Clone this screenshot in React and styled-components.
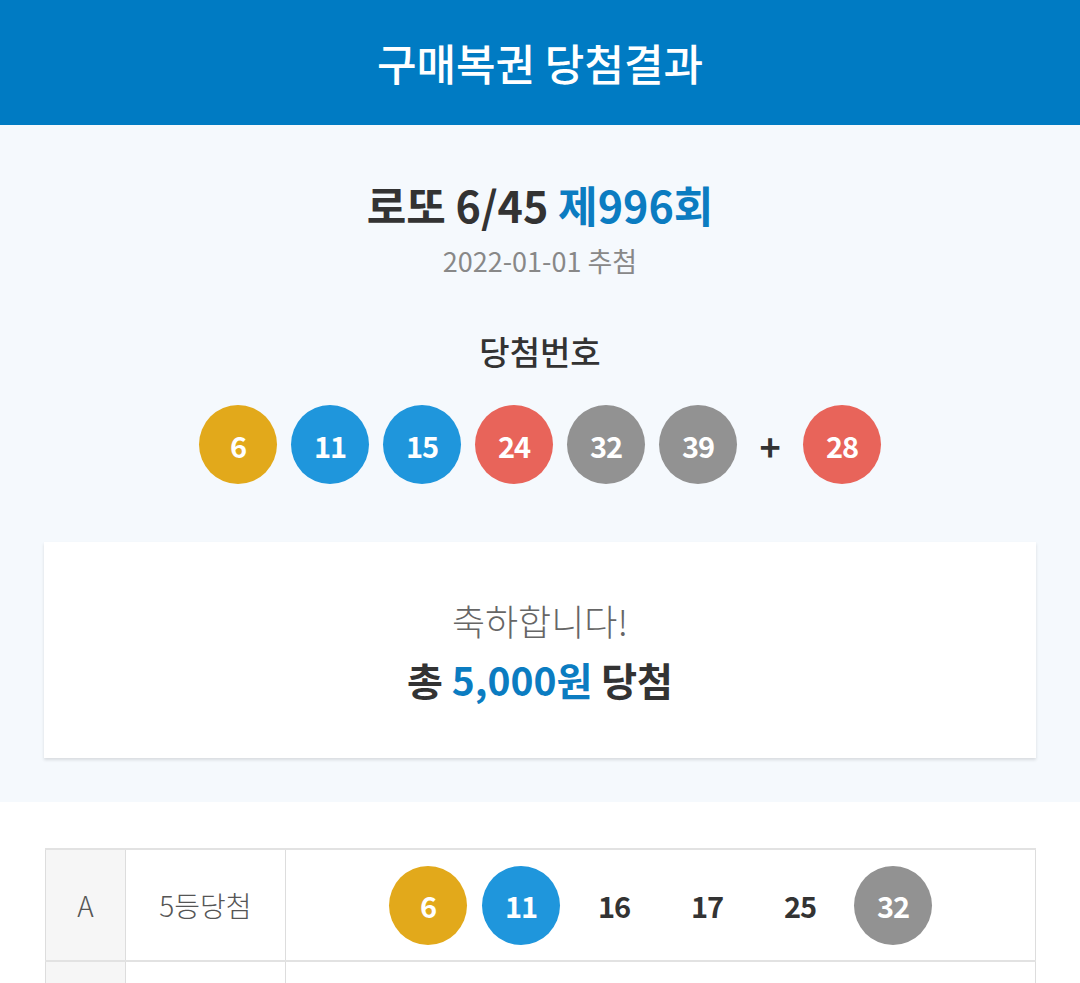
import React from 'react';
import styled, { createGlobalStyle } from 'styled-components';

const GlobalStyle = createGlobalStyle`
  html, body {
    margin: 0;
    padding: 0;
    background: #ffffff;
    font-family: "Noto Sans CJK KR", "Noto Sans", sans-serif;
  }
`;

const Page = styled.div`
  width: 1080px;
  min-height: 983px;
  background: #fff;
`;

const Header = styled.header`
  height: 125px;
  background: #007bc3;
  display: flex;
  align-items: center;
  justify-content: center;
  color: #fff;
  font-size: 43px;
  font-weight: 500;
  padding-bottom: 2px;
  box-sizing: border-box;
`;

const Summary = styled.section`
  background: #f5f9fd;
  padding: 53px 44px 44px;
  display: flex;
  flex-direction: column;
  align-items: center;
`;

const Round = styled.h1`
  margin: 0;
  font-size: 43px;
  font-weight: 700;
  color: #333;
  line-height: 52px;
`;

const Blue = styled.span`
  color: #0b7cc1;
`;

const DrawDate = styled.div`
  margin-top: 13px;
  font-size: 27px;
  color: #888;
  line-height: 36px;
`;

const Label = styled.div`
  margin-top: 51px;
  font-size: 33px;
  font-weight: 500;
  color: #333;
  line-height: 42px;
`;

const BallRow = styled.div`
  margin-top: ${p => (p.$top != null ? p.$top : 0)}px;
  display: flex;
  align-items: center;
  gap: ${p => p.$gap || 14}px;
`;

const colors = {
  yellow: '#e2a91b',
  blue: '#1f96dc',
  red: '#e8645a',
  grey: '#929292',
};

const ballColor = n => {
  if (n <= 10) return colors.yellow;
  if (n <= 20) return colors.blue;
  if (n <= 30) return colors.red;
  return colors.grey;
};

const Ball = styled.span`
  width: 78px;
  height: 79px;
  border-radius: 50%;
  background: ${p => p.$bg};
  color: #fff;
  display: flex;
  align-items: center;
  justify-content: center;
  font-size: 29px;
  font-weight: 700;
  letter-spacing: -1px;
`;

const Plain = styled.span`
  width: 78px;
  height: 79px;
  display: flex;
  align-items: center;
  justify-content: center;
  font-size: 29px;
  font-weight: 700;
  color: #333;
  letter-spacing: -1px;
`;

const Plus = styled.span`
  width: 40px;
  text-align: center;
  font-size: 36px;
  font-weight: 700;
  color: #333;
  margin: 0 -1px;
`;

const Card = styled.div`
  margin-top: 58px;
  align-self: stretch;
  height: 216px;
  background: #fff;
  box-shadow: 0 2px 3px rgba(0, 0, 0, 0.12);
  display: flex;
  flex-direction: column;
  align-items: center;
  justify-content: center;
  gap: 10px;
`;

const Congrats = styled.div`
  font-size: 36px;
  font-weight: 300;
  color: #666;
  line-height: 48px;
`;

const Total = styled.div`
  font-size: 39px;
  font-weight: 700;
  color: #333;
  line-height: 50px;
`;

const TableWrap = styled.div`
  padding: 46px 44px 0 45px;
`;

const Table = styled.div`
  border-top: 2px solid #e2e2e2;
`;

const Row = styled.div`
  display: grid;
  grid-template-columns: 80px 160px 1fr;
  height: 110px;
  border-bottom: 2px solid #e2e2e2;
`;

const Cell = styled.div`
  display: flex;
  align-items: center;
  justify-content: center;
  border-left: 1px solid #ddd;
  background: ${p => (p.$shade ? '#f6f6f6' : '#fff')};
  color: #555;
  font-size: 28px;
  font-weight: 300;
  &:last-child {
    border-right: 1px solid #ddd;
  }
`;

const winning = [6, 11, 15, 24, 32, 39];
const bonus = 28;

const tickets = [
  { id: 'A', rank: '5등당첨', nums: [6, 11, 16, 17, 25, 32] },
  { id: '', rank: '', nums: [] },
];

export default function App() {
  return (
    <Page>
      <GlobalStyle />
      <Header>구매복권 당첨결과</Header>
      <Summary>
        <Round>
          로또 6/45 <Blue>제996회</Blue>
        </Round>
        <DrawDate>2022-01-01 추첨</DrawDate>
        <Label>당첨번호</Label>
        <BallRow $top={33}>
          {winning.map(n => (
            <Ball key={n} $bg={ballColor(n)}>{n}</Ball>
          ))}
          <Plus>+</Plus>
          <Ball $bg={ballColor(bonus)}>{bonus}</Ball>
        </BallRow>
        <Card>
          <Congrats>축하합니다!</Congrats>
          <Total>
            총 <Blue>5,000원</Blue> 당첨
          </Total>
        </Card>
      </Summary>
      <TableWrap>
        <Table>
          {tickets.map((t, i) => (
            <Row key={i}>
              <Cell $shade>{t.id}</Cell>
              <Cell>{t.rank}</Cell>
              <Cell>
                <BallRow $gap={15}>
                  {t.nums.map(n =>
                    winning.includes(n) ? (
                      <Ball key={n} $bg={ballColor(n)}>{n}</Ball>
                    ) : (
                      <Plain key={n}>{n}</Plain>
                    )
                  )}
                </BallRow>
              </Cell>
            </Row>
          ))}
        </Table>
      </TableWrap>
    </Page>
  );
}
